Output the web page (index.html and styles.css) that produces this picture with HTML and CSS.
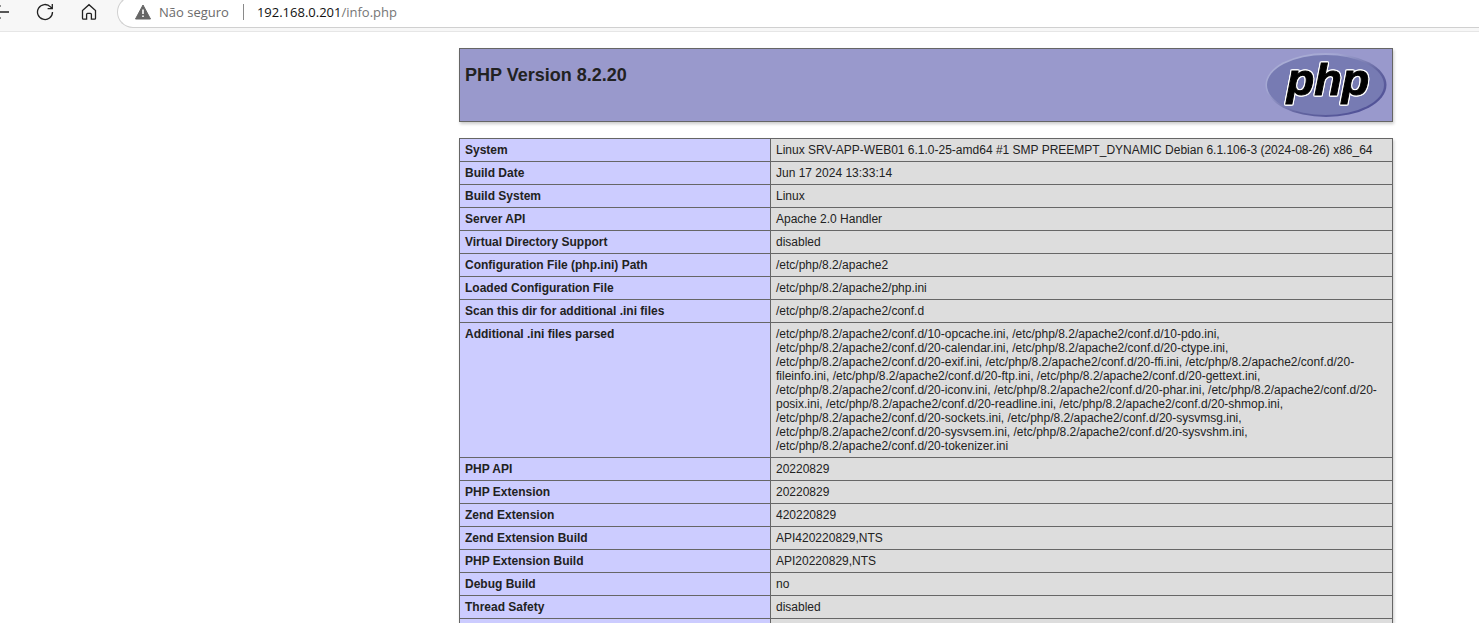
FILE: index.html
```html
<!DOCTYPE html>
<html lang="pt">
<head>
<meta charset="utf-8">
<title>PHP 8.2.20 - phpinfo()</title>
<link rel="stylesheet" href="styles.css">
</head>
<body>
<header class="toolbar">
  <button class="tool back" type="button" aria-label="Voltar">
    <svg width="18" height="18" viewBox="0 0 18 18"><path d="M17 9H1.500M8.500 2.500L2 9L8.500 15.500"/></svg>
  </button>
  <button class="tool" type="button" aria-label="Atualizar">
    <svg width="18" height="18" viewBox="0 0 18 18"><path d="M16.500 9A7.500 7.500 0 1 1 14.500 3.900L16 5.500M16.300 1V5.700H11.600"/></svg>
  </button>
  <button class="tool" type="button" aria-label="Início">
    <svg width="18" height="18" viewBox="0 0 18 18"><path d="M2.500 7.600L9 1.700L15.500 7.600V15.300Q15.500 16.200 14.600 16.200H11.400V11.400Q11.400 10.400 10.400 10.400H7.600Q6.600 10.400 6.600 11.400V16.200H3.400Q2.500 16.200 2.500 15.300Z"/></svg>
  </button>
  <div class="address">
    <button class="security" type="button">
      <svg width="16" height="16" viewBox="0 0 16 16"><path d="M8 1L15.500 15H.5Z" fill="#666" stroke="#666" stroke-linejoin="round"/><path d="M8 5.500V10M8 11.500V13" stroke="#fff" stroke-width="1.600"/></svg>
      <span>Não seguro</span>
    </button>
    <div class="url" role="textbox" aria-label="Endereço" tabindex="0"><span class="host">192.168.0.201</span>/info.php</div>
  </div>
</header>
<main class="page">
  <div class="banner">
    <h1>PHP Version 8.2.20</h1>
    <a href="http://www.php.net/" aria-label="PHP logo">
      <svg class="logo" width="122" height="64" viewBox="0 0 122 64">
        <defs>
          <linearGradient id="rim" x1="0" y1="0" x2="1" y2="1">
            <stop offset="0" stop-color="#aeb2d5"/>
            <stop offset=".3" stop-color="#a4a7d3"/>
            <stop offset=".6" stop-color="#62649f"/>
            <stop offset="1" stop-color="#484893"/>
          </linearGradient>
        </defs>
        <ellipse cx="61" cy="32" rx="60.500" ry="32" fill="url(#rim)"/>
        <ellipse cx="60.500" cy="32" rx="58.500" ry="30" fill="#777bb3"/>
        <text class="wordmark" x="63" y="42" text-anchor="middle">php</text>
      </svg>
    </a>
  </div>
  <table class="info">
    <tbody>
      <tr><th scope="row">System</th><td>Linux SRV-APP-WEB01 6.1.0-25-amd64 #1 SMP PREEMPT_DYNAMIC Debian 6.1.106-3 (2024-08-26) x86_64</td></tr>
      <tr><th scope="row">Build Date</th><td>Jun 17 2024 13:33:14</td></tr>
      <tr><th scope="row">Build System</th><td>Linux</td></tr>
      <tr><th scope="row">Server API</th><td>Apache 2.0 Handler</td></tr>
      <tr><th scope="row">Virtual Directory Support</th><td>disabled</td></tr>
      <tr><th scope="row">Configuration File (php.ini) Path</th><td>/etc/php/8.2/apache2</td></tr>
      <tr><th scope="row">Loaded Configuration File</th><td>/etc/php/8.2/apache2/php.ini</td></tr>
      <tr><th scope="row">Scan this dir for additional .ini files</th><td>/etc/php/8.2/apache2/conf.d</td></tr>
      <tr><th scope="row">Additional .ini files parsed</th><td>/etc/php/8.2/apache2/conf.d/10-opcache.ini, /etc/php/8.2/apache2/conf.d/10-pdo.ini,
/etc/php/8.2/apache2/conf.d/20-calendar.ini, /etc/php/8.2/apache2/conf.d/20-ctype.ini,
/etc/php/8.2/apache2/conf.d/20-exif.ini, /etc/php/8.2/apache2/conf.d/20-ffi.ini, /etc/php/8.2/apache2/conf.d/20-fileinfo.ini, /etc/php/8.2/apache2/conf.d/20-ftp.ini, /etc/php/8.2/apache2/conf.d/20-gettext.ini,
/etc/php/8.2/apache2/conf.d/20-iconv.ini, /etc/php/8.2/apache2/conf.d/20-phar.ini, /etc/php/8.2/apache2/conf.d/20-posix.ini, /etc/php/8.2/apache2/conf.d/20-readline.ini, /etc/php/8.2/apache2/conf.d/20-shmop.ini,
/etc/php/8.2/apache2/conf.d/20-sockets.ini, /etc/php/8.2/apache2/conf.d/20-sysvmsg.ini,
/etc/php/8.2/apache2/conf.d/20-sysvsem.ini, /etc/php/8.2/apache2/conf.d/20-sysvshm.ini,
/etc/php/8.2/apache2/conf.d/20-tokenizer.ini</td></tr>
      <tr><th scope="row">PHP API</th><td>20220829</td></tr>
      <tr><th scope="row">PHP Extension</th><td>20220829</td></tr>
      <tr><th scope="row">Zend Extension</th><td>420220829</td></tr>
      <tr><th scope="row">Zend Extension Build</th><td>API420220829,NTS</td></tr>
      <tr><th scope="row">PHP Extension Build</th><td>API20220829,NTS</td></tr>
      <tr><th scope="row">Debug Build</th><td>no</td></tr>
      <tr><th scope="row">Thread Safety</th><td>disabled</td></tr>
      <tr><th scope="row"></th><td></td></tr>
    </tbody>
  </table>
</main>
</body>
</html>
```
FILE: styles.css
```css
* {
  box-sizing: border-box;
}

body {
  margin: 0;
  height: 100vh;
  overflow: hidden;
  background: #fff;
  color: #222;
  font-family: "Liberation Sans", Arial, sans-serif;
}

/* Browser toolbar */
.toolbar {
  display: flex;
  align-items: flex-start;
  gap: 26px;
  margin-top: -4px;
  padding-bottom: 3px;
  background: #f7f7f7;
  border-bottom: 1px solid #e6e6e6;
  font-family: "Open Sans", "Noto Sans", sans-serif;
  font-size: 13px;
}

.tool,
.security {
  display: flex;
  align-items: center;
  flex: none;
  height: 32px;
  padding: 0;
  border: 0;
  background: none;
  font: inherit;
}

.tool svg {
  fill: none;
  stroke: #222;
  stroke-width: 1.3;
}

.back {
  margin-left: -8px;
}

.tool:nth-child(3) {
  margin-right: -7px;
}

.address {
  display: flex;
  align-items: center;
  flex: 1;
  height: 32px;
  padding-left: 17px;
  border: 1px solid #d0d0d0;
  border-right: 0;
  border-radius: 16px 0 0 16px;
  background: #fff;
}

.security {
  gap: 8px;
  color: #6b6b6b;
}

.url {
  margin-left: 14px;
  padding-left: 13px;
  border-left: 1px solid #8a8a8a;
  line-height: 16px;
  color: #767676;
}

.host {
  color: #111;
}

/* phpinfo content */
.page {
  padding: 16px 86px 0 459px;
}

.banner {
  display: flex;
  justify-content: space-between;
  margin-bottom: 16px;
  padding: 4px 5px;
  border: 1px solid #666;
  background: #99c;
  box-shadow: 1px 2px 3px #ccc;
}

.banner h1 {
  margin: 11px 0 0;
  font-size: 18px;
  line-height: 22px;
}

.logo {
  display: block;
}

.wordmark {
  font-size: 45px;
  font-weight: bold;
  font-style: italic;
  fill: #000;
  stroke: #000;
  stroke-width: 1px;
  filter: drop-shadow(1px 0 #fff) drop-shadow(-1px 0 #fff) drop-shadow(0 1px #fff) drop-shadow(0 -1px #fff);
}

.info {
  width: 100%;
  border-collapse: collapse;
  box-shadow: 1px 2px 3px #ccc;
  font-size: 12px;
  line-height: 14px;
}

.info th,
.info td {
  height: 23px;
  padding: 4px 5px;
  border: 1px solid #666;
  text-align: left;
  vertical-align: top;
}

.info th {
  width: 311px;
  background: #ccf;
}

.info td {
  background: #ddd;
}
```
